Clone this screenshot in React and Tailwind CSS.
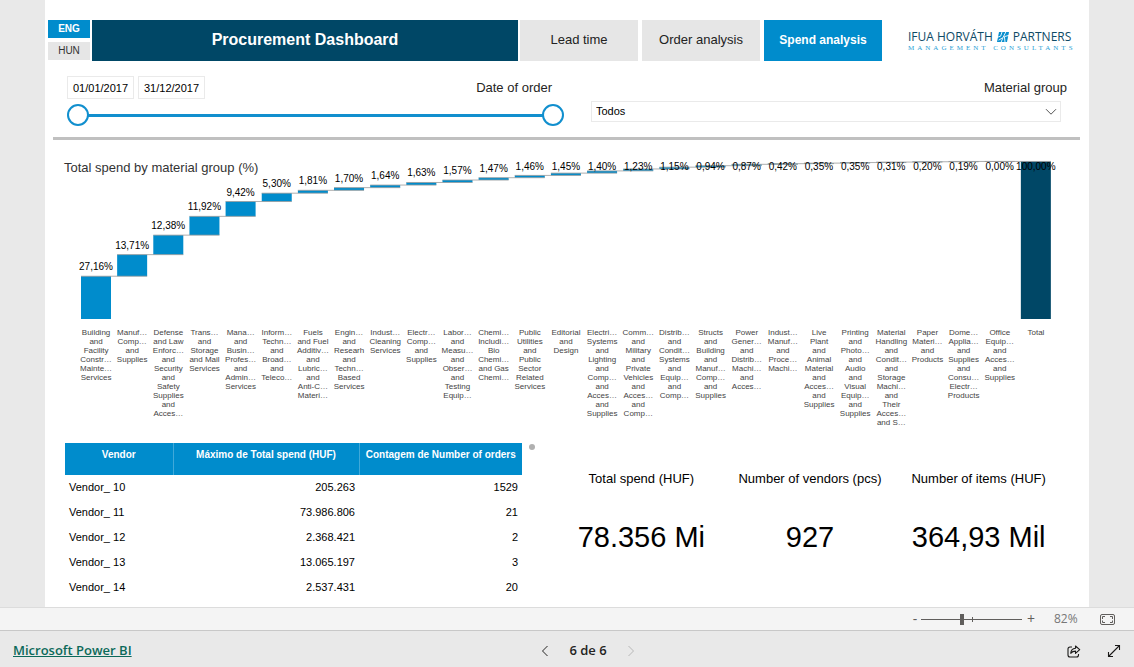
import { useState } from 'react'
import { clsx } from 'clsx'

const BARS = [
  { value: 27.16, label: 'Building\nand\nFacility\nConstr…\nMainte…\nServices' },
  { value: 13.71, label: 'Manuf…\nComp…\nand\nSupplies' },
  { value: 12.38, label: 'Defense\nand Law\nEnforc…\nand\nSecurity\nand\nSafety\nSupplies\nand\nAcces…' },
  { value: 11.92, label: 'Trans…\nand\nStorage\nand Mail\nServices' },
  { value: 9.42, label: 'Mana…\nand\nBusin…\nProfes…\nand\nAdmin…\nServices' },
  { value: 5.3, label: 'Inform…\nTechn…\nand\nBroad…\nand\nTeleco…' },
  { value: 1.81, label: 'Fuels\nand Fuel\nAdditiv…\nand\nLubric…\nand\nAnti-C…\nMateri…' },
  { value: 1.7, label: 'Engin…\nand\nResearh\nand\nTechn…\nBased\nServices' },
  { value: 1.64, label: 'Indust…\nCleaning\nServices' },
  { value: 1.63, label: 'Electr…\nComp…\nand\nSupplies' },
  { value: 1.57, label: 'Labor…\nand\nMeasu…\nand\nObser…\nand\nTesting\nEquip…' },
  { value: 1.47, label: 'Chemi…\nIncludi…\nBio\nChemi…\nand Gas\nChemi…' },
  { value: 1.46, label: 'Public\nUtilities\nand\nPublic\nSector\nRelated\nServices' },
  { value: 1.45, label: 'Editorial\nand\nDesign' },
  { value: 1.4, label: 'Electri…\nSystems\nand\nLighting\nand\nComp…\nand\nAcces…\nand\nSupplies' },
  { value: 1.23, label: 'Comm…\nand\nMilitary\nand\nPrivate\nVehicles\nand\nAcces…\nand\nComp…' },
  { value: 1.15, label: 'Distrib…\nand\nCondit…\nSystems\nand\nEquip…\nand\nComp…' },
  { value: 0.94, label: 'Structs\nand\nBuilding\nand\nManuf…\nComp…\nand\nSupplies' },
  { value: 0.87, label: 'Power\nGener…\nand\nDistrib…\nMachi…\nand\nAcces…' },
  { value: 0.42, label: 'Indust…\nManuf…\nand\nProce…\nMachi…' },
  { value: 0.35, label: 'Live\nPlant\nand\nAnimal\nMaterial\nand\nAcces…\nand\nSupplies' },
  { value: 0.35, label: 'Printing\nand\nPhoto…\nand\nAudio\nand\nVisual\nEquip…\nand\nSupplies' },
  { value: 0.31, label: 'Material\nHandling\nand\nCondit…\nand\nStorage\nMachi…\nand\nTheir\nAcces…\nand S…' },
  { value: 0.2, label: 'Paper\nMateri…\nand\nProducts' },
  { value: 0.19, label: 'Dome…\nApplia…\nand\nSupplies\nand\nConsu…\nElectr…\nProducts' },
  { value: 0, label: 'Office\nEquip…\nand\nAcces…\nand\nSupplies' },
  { value: 100, total: true, label: 'Total' },
]

const VENDORS = [
  { name: 'Vendor_ 10', spend: '205.263', orders: '1529' },
  { name: 'Vendor_ 11', spend: '73.986.806', orders: '21' },
  { name: 'Vendor_ 12', spend: '2.368.421', orders: '2' },
  { name: 'Vendor_ 13', spend: '13.065.197', orders: '3' },
  { name: 'Vendor_ 14', spend: '2.537.431', orders: '20' },
]

const KPIS = [
  { label: 'Total spend (HUF)', value: '78.356 Mi' },
  { label: 'Number of vendors (pcs)', value: '927' },
  { label: 'Number of items (HUF)', value: '364,93 Mil' },
]

const TABS = ['Lead time', 'Order analysis', 'Spend analysis']

function Logo() {
  return (
    <div className="flex flex-col justify-center pl-[26px] w-[207px] shrink-0 text-[#0e4a66]">
      <div className="flex items-center gap-1 font-['Open_Sans',sans-serif] text-[12px] leading-[14px] whitespace-nowrap">
        <span>IFUA HORVÁTH</span>
        <svg width="12" height="10" viewBox="0 0 12 10" aria-hidden="true">
          <path d="M2 0h10l-2 10H0z" fill="#0a8fce" />
          <path d="M5 0 3.6 4.2 0 5.4M8.8 0 6.2 5.2 4.2 10M12 3.4 7.4 4.6 8 10M1.6 8.2 5.6 5.8" stroke="#fff" strokeWidth="0.9" fill="none" />
        </svg>
        <span>PARTNERS</span>
      </div>
      <div className="font-['Liberation_Serif',serif] text-[7px] leading-[8px] tracking-[3px] text-[#2a9fd6] whitespace-nowrap">MANAGEMENT CONSULTANTS</div>
    </div>
  )
}

function Header({ lang, setLang, tab, setTab }) {
  return (
    <header className="flex h-[41px] pl-[3px]">
      <div className="flex flex-col gap-1 w-[42px] mr-[2px] pb-px">
        {['ENG', 'HUN'].map(l => (
          <button key={l} onClick={() => setLang(l)}
            className={clsx('flex-1 text-[10px] leading-none', lang === l ? 'bg-[#008ccc] text-white font-bold' : 'bg-[#e6e6e6] text-[#333]')}>
            {l}
          </button>
        ))}
      </div>
      <h1 className="flex-1 flex items-center justify-center bg-[#004766] text-white font-bold text-[16px] pb-px mr-[2px]">Procurement Dashboard</h1>
      <nav className="flex gap-1">
        {TABS.map(t => (
          <button key={t} onClick={() => setTab(t)}
            className={clsx('w-[118px] pb-px', tab === t ? 'bg-[#008ccc] text-white font-bold text-[12px]' : 'bg-[#e6e6e6] text-[#222] text-[13px]')}>
            {t}
          </button>
        ))}
      </nav>
      <Logo />
    </header>
  )
}

const THUMB = 'absolute inset-0 w-full h-full appearance-none bg-transparent pointer-events-none [&::-webkit-slider-thumb]:appearance-none [&::-webkit-slider-thumb]:pointer-events-auto [&::-webkit-slider-thumb]:size-[22px] [&::-webkit-slider-thumb]:rounded-full [&::-webkit-slider-thumb]:border-2 [&::-webkit-slider-thumb]:border-solid [&::-webkit-slider-thumb]:border-[#118fce] [&::-webkit-slider-thumb]:bg-white'

function Filters() {
  const [from, setFrom] = useState(0)
  const [to, setTo] = useState(364)

  return (
    <section className="grid grid-cols-[497fr_476fr] gap-[27px] px-[22px] pt-[15px] pb-[11px]">
      <div>
        <div className="flex items-center h-[23px]">
          <input aria-label="Start date" defaultValue="01/01/2017" className="w-[67px] h-full border border-[#eaeaea] text-[11px] text-center text-black" />
          <input aria-label="End date" defaultValue="31/12/2017" className="w-[67px] h-full ml-1 border border-[#eaeaea] text-[11px] text-center text-black" />
          <span className="ml-auto mr-3 text-[13px] text-[#252423]">Date of order</span>
        </div>
        <div className="relative h-[22px] mt-[5px] flex items-center">
          <div className="w-full h-[3px] mx-[10px] bg-[#118fce]" />
          <input type="range" aria-label="From" min="0" max="364" value={from} onChange={e => setFrom(Math.min(+e.target.value, to))} className={THUMB} />
          <input type="range" aria-label="To" min="0" max="364" value={to} onChange={e => setTo(Math.max(+e.target.value, from))} className={THUMB} />
        </div>
      </div>
      <div>
        <label htmlFor="material" className="flex items-center justify-end h-[23px] text-[13px] text-[#252423]">Material group</label>
        <div className="relative mt-[2px] mr-[6px]">
          <select id="material" className="appearance-none block w-full h-[21px] border border-[#eaeaea] pl-1 text-[11px] text-black bg-white">
            <option>Todos</option>
          </select>
          <svg className="absolute right-1 top-[7px] pointer-events-none" width="12" height="8" viewBox="0 0 12 8" fill="none" stroke="#555" aria-hidden="true">
            <path d="M1 1.2 6 6.2 11 1.2" />
          </svg>
        </div>
      </div>
    </section>
  )
}

const STEP = 976 / 27
const BASE = 179
const SCALE = 1.575

function SpendChart() {
  let sum = 0
  const bars = BARS.map((b, i) => {
    const start = b.total ? 0 : sum
    const end = start + b.value
    if (!b.total) sum = end
    return { ...b, x: i * STEP + 3, y: BASE - end * SCALE, h: b.value * SCALE }
  })

  return (
    <section className="relative pl-[33px] pr-[35px]">
      <h2 className="absolute left-[19px] top-[18px] text-[13px] leading-[20px] text-[#333]">Total spend by material group (%)</h2>
      <svg className="block w-full overflow-visible" viewBox="0 0 976 180" role="img" aria-label="Total spend by material group">
        {bars.map(b => (
          <rect key={b.label} x={b.x} y={b.y} width="30" height={b.h} fill={b.total ? '#004766' : '#008ccc'} />
        ))}
        {bars.slice(0, -1).map(b => (
          <path key={b.label} d={`M${b.x} ${b.y}h${STEP + 30}`} stroke="#999" strokeWidth="0.8" />
        ))}
        {bars.map(b => (
          <text key={b.label} x={b.x + 15} y={Math.max(b.y - 6, 30)} textAnchor="middle" className="text-[10px] fill-black">
            {b.value.toFixed(2).replace('.', ',')}%
          </text>
        ))}
      </svg>
      <div className="grid grid-cols-[repeat(27,minmax(0,1fr))] mt-2 min-h-[99px]">
        {BARS.map(b => (
          <div key={b.label} className="whitespace-pre text-center text-[8px] leading-[9px] text-[#444]">{b.label}</div>
        ))}
      </div>
    </section>
  )
}

function VendorTable() {
  return (
    <table className="w-[457px] table-fixed text-[11px] text-black">
      <thead>
        <tr className="h-8 bg-[#008ccc] text-white text-[10px] leading-[16px] align-top">
          <th className="w-[108px] pt-1 border-r border-[#40a9d9]">Vendor</th>
          <th className="w-[186px] pt-1 border-r border-[#40a9d9]">Máximo de Total spend (HUF)</th>
          <th className="pt-1 whitespace-nowrap">Contagem de Number of orders</th>
        </tr>
      </thead>
      <tbody>
        {VENDORS.map(v => (
          <tr key={v.name} className="h-[25px]">
            <td className="pl-1">{v.name}</td>
            <td className="pr-1 text-right">{v.spend}</td>
            <td className="pr-1 text-right">{v.orders}</td>
          </tr>
        ))}
      </tbody>
    </table>
  )
}

function ZoomBar() {
  const [zoom, setZoom] = useState(82)

  return (
    <div className="flex items-center justify-end h-6 pr-[19px] border-t border-b border-t-[#dcdcdc] border-b-[#c8c8c8] bg-[#f4f4f4] text-[#605e5c] font-['Open_Sans',sans-serif]">
      <button aria-label="Zoom out" onClick={() => setZoom(zoom - 1)} className="w-3 text-[14px] leading-none">-</button>
      <div className="relative flex items-center w-[101px] h-[11px]">
        <div className="w-full h-px bg-[#605e5c]" />
        <div className="absolute left-1/2 top-[3px] w-px h-[5px] bg-[#605e5c]" />
        <input type="range" aria-label="Zoom" min="10" max="190" value={zoom} onChange={e => setZoom(+e.target.value)}
          className="absolute inset-0 w-full h-full appearance-none bg-transparent [&::-webkit-slider-thumb]:appearance-none [&::-webkit-slider-thumb]:w-1 [&::-webkit-slider-thumb]:h-[11px] [&::-webkit-slider-thumb]:bg-[#605e5c]" />
      </div>
      <button aria-label="Zoom in" onClick={() => setZoom(zoom + 1)} className="w-[18px] text-[14px] leading-none">+</button>
      <span className="ml-[14px] w-[26px] text-[12px] text-[#777]">{zoom}%</span>
      <button aria-label="Fit to page" className="ml-5">
        <svg width="15" height="11" viewBox="0 0 15 11" fill="none" stroke="#605e5c" aria-hidden="true">
          <rect x="0.5" y="0.5" width="14" height="10" rx="1.5" />
          <path d="M5 2.5H2.5V5M2.5 6.5V8.5H5M10 2.5h2.5V5M12.5 6.5V8.5H10" />
        </svg>
      </button>
    </div>
  )
}

function Footer() {
  return (
    <footer className="grid grid-cols-[1fr_auto_1fr] items-center h-9 px-[13px] pt-1 font-['Open_Sans',sans-serif]">
      <a href="#powerbi" className="justify-self-start text-[13px] font-semibold text-[#0c695a] underline">Microsoft Power BI</a>
      <div className="flex items-center justify-center gap-5 pl-[42px]">
        <button aria-label="Previous page">
          <svg width="8" height="12" viewBox="0 0 8 12" fill="none" stroke="#252423" aria-hidden="true"><path d="M6.5 1 1.5 6l5 5" /></svg>
        </button>
        <span className="text-[13px] font-semibold text-[#252423]">6 de 6</span>
        <button aria-label="Next page" disabled>
          <svg width="8" height="12" viewBox="0 0 8 12" fill="none" stroke="#b8b8b8" aria-hidden="true"><path d="M1.5 1 6.5 6l-5 5" /></svg>
        </button>
      </div>
      <div className="flex items-center justify-end gap-[26px]">
        <button aria-label="Share">
          <svg width="14" height="13" viewBox="0 0 14 13" fill="none" stroke="#1b1a19" strokeWidth="1.1" strokeLinejoin="round" aria-hidden="true">
            <path d="M5 2H3a2 2 0 0 0-2 2v6a2 2 0 0 0 2 2h6.500a2 2 0 0 0 2-2V9" />
            <path d="M8.500 1v2.300C5.600 3.500 4 5.200 3.700 8.300c1.300-1.600 2.800-2.200 4.800-2.200v2.300L12.700 4.700z" />
          </svg>
        </button>
        <button aria-label="Full screen">
          <svg width="14" height="14" viewBox="0 0 14 14" fill="none" stroke="#1b1a19" strokeWidth="1.1" aria-hidden="true">
            <path d="M1.500 12.500l11-11M8 1.500h4.500V6M1.500 8v4.500H6" />
          </svg>
        </button>
      </div>
    </footer>
  )
}

export default function App() {
  const [lang, setLang] = useState('ENG')
  const [tab, setTab] = useState('Spend analysis')

  return (
    <div className="min-h-screen flex flex-col bg-[#e9e9e9] font-['Liberation_Sans',Arial,sans-serif]">
      <main className="flex-1 mx-[45px] pt-5 bg-white">
        <Header lang={lang} setLang={setLang} tab={tab} setTab={setTab} />
        <Filters />
        <div className="h-[3px] ml-2 mr-[9px] bg-[#c0c0c0]" />
        <SpendChart />
        <section className="flex pt-4 pl-5 pr-[26px]">
          <VendorTable />
          <div className="size-[6px] mt-px ml-[7px] rounded-full bg-[#b0b0b0]" />
          <div className="flex-1 grid grid-cols-3 pl-[22px] text-black text-center">
            {KPIS.map(k => (
              <div key={k.label} className="pt-[26px]">
                <div className="text-[13px] leading-[20px] whitespace-nowrap">{k.label}</div>
                <div className="mt-7 text-[29px] leading-[40px] whitespace-nowrap">{k.value}</div>
              </div>
            ))}
          </div>
        </section>
      </main>
      <ZoomBar />
      <Footer />
    </div>
  )
}
